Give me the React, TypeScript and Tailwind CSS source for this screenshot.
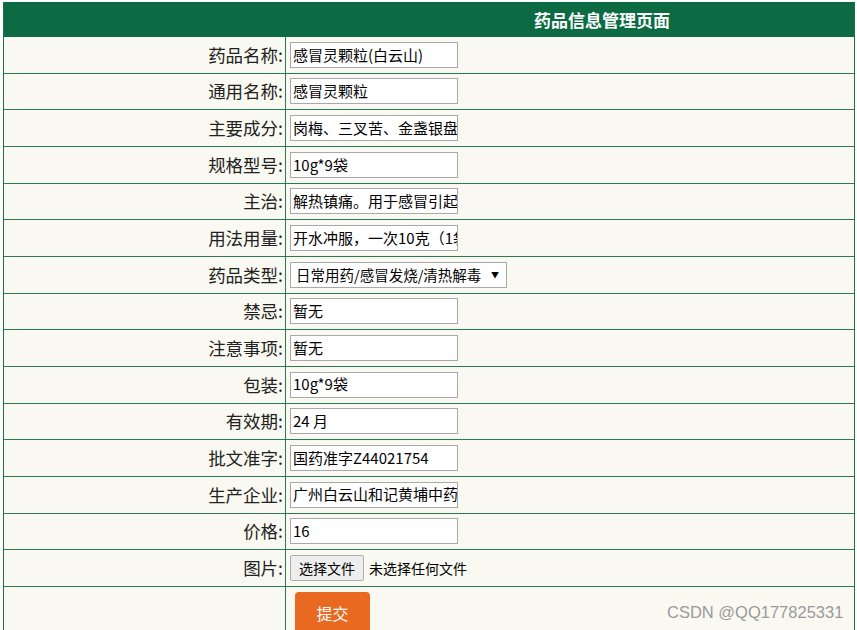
import React from "react";

const rows: { label: string; value?: string; kind?: "select" | "file" }[] = [
  { label: "药品名称:", value: "感冒灵颗粒(白云山)" },
  { label: "通用名称:", value: "感冒灵颗粒" },
  { label: "主要成分:", value: "岗梅、三叉苦、金盏银盘、野菊花" },
  { label: "规格型号:", value: "10g*9袋" },
  { label: "主治:", value: "解热镇痛。用于感冒引起的头痛" },
  { label: "用法用量:", value: "开水冲服，一次10克（1袋）" },
  { label: "药品类型:", kind: "select" },
  { label: "禁忌:", value: "暂无" },
  { label: "注意事项:", value: "暂无" },
  { label: "包装:", value: "10g*9袋" },
  { label: "有效期:", value: "24 月" },
  { label: "批文准字:", value: "国药准字Z44021754" },
  { label: "生产企业:", value: "广州白云山和记黄埔中药有限公司" },
  { label: "价格:", value: "16" },
  { label: "图片:", kind: "file" },
];

const font = { fontFamily: '"Noto Sans CJK SC", "Noto Sans", sans-serif' };

export default function App() {
  return (
    <div className="w-[857px] h-[630px] overflow-hidden bg-white relative" style={font}>
      <div className="ml-[3px] mt-[2px] w-[852px] border-l border-r border-[#1f6e4a] bg-[#f9f9f1]">
        <div className="h-[35px] bg-[#0c6b43] flex items-center pl-[530px] text-white font-bold text-[17px]">
          药品信息管理页面
        </div>
        {rows.map((r, i) => (
          <div key={i} className="grid grid-cols-[282px_1fr] h-[36.67px] border-b border-[#2c7a55]">
            <div className="flex items-center justify-end pr-[2px] text-[17.5px] text-[#222] border-r border-[#2c7a55]">
              {r.label}
            </div>
            <div className="flex items-center pl-[4px]">
              {r.kind === "select" ? (
                <div className="h-[26px] w-[217px] border border-[#a9a9a9] bg-white flex items-center justify-between pl-[5px] pr-[7px] text-[14.5px] text-black">
                  <span>日常用药/感冒发烧/清热解毒</span>
                  <span className="text-[8px]">▼</span>
                </div>
              ) : r.kind === "file" ? (
                <div className="flex items-center gap-[5px] text-[14px] text-black">
                  <div className="h-[26px] w-[74px] border border-[#adadad] rounded-[2px] bg-[#eeeeee] flex items-center justify-center">
                    选择文件
                  </div>
                  <span>未选择任何文件</span>
                </div>
              ) : (
                <div className="h-[26px] w-[168px] border border-[#a9a9a9] bg-white flex items-center pl-[2px] text-[15px] text-black overflow-hidden whitespace-nowrap">
                  {r.value}
                </div>
              )}
            </div>
          </div>
        ))}
        <div className="grid grid-cols-[282px_1fr] h-[60px]">
          <div className="border-r border-[#2c7a55]" />
          <div className="pl-[9px] pt-[5px]">
            <div className="w-[75px] h-[50px] bg-[#e8691f] rounded-t-[4px] text-white text-[16px] flex items-start justify-center pt-[9px]">
              提交
            </div>
          </div>
        </div>
      </div>
      <div
        className="absolute left-[667px] top-[600px] text-[16.5px] text-[#9a9a9a]"
        style={{ fontFamily: '"Liberation Sans", Arial, sans-serif' }}
      >
        CSDN @QQ177825331
      </div>
    </div>
  );
}
